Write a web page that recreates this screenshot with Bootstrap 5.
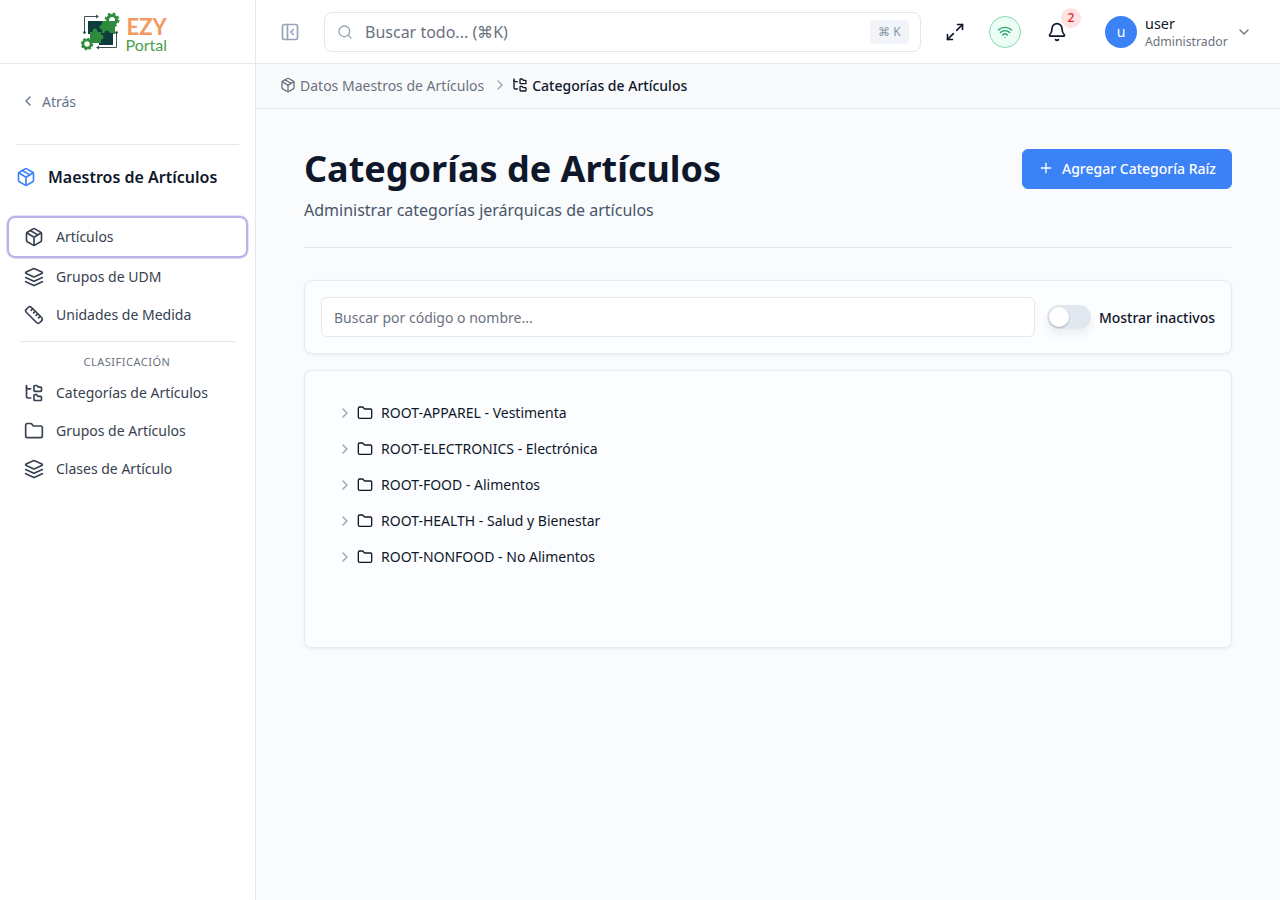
<!DOCTYPE html>
<html lang="es">
<head>
    <meta charset="UTF-8">
    <title>Categorías de Artículos</title>
    <link rel="stylesheet" href="https://cdn.jsdelivr.net/npm/bootstrap@5.3.3/dist/css/bootstrap.min.css">
    <style>
        html, body { height: 100%; }
        body { font-family: "Noto Sans", "Liberation Sans", sans-serif; font-size: 14px; color: #0f172a; background: #fafbfd; overflow: hidden; }
        .ico { width: 20px; height: 20px; fill: none; stroke: currentColor; stroke-width: 2; stroke-linecap: round; stroke-linejoin: round; flex: none; }
        .ico-16 { width: 16px; height: 16px; }
        .app-side { width: 256px; height: 900px; background: #fff; border-right: 1px solid #e5e7eb; flex: none; }
        .logo-box { height: 64px; border-bottom: 1px solid #e5e7eb; padding-right: 5px; }
        .logo-text { width: 43px; margin: 6px 0 0 5px; font-family: "Lato", sans-serif; }
        .logo-ezy { color: #f2995f; font-size: 22px; font-weight: 700; line-height: 20px; }
        .logo-portal { color: #4a9f50; font-size: 16px; line-height: 15px; margin: 0 0 0 -1px; }
        .back-link { height: 80px; padding: 0 0 6px 20px; color: #64748b; gap: 6px; text-decoration: none; }
        .side-rule { border-top: 1px solid #e5e7eb; margin: 0 16px 0 16px; height: 0; }
        .side-rule-in { border-top: 1px solid #e5e7eb; margin: 7px 20px 0 20px; height: 0; }
        .side-title { height: 71px; padding: 0 0 7px 16px; gap: 12px; font-size: 16px; font-weight: 600; color: #0f172a; }
        .side-title .ico { color: #3b82f6; }
        .side-link { height: 38px; margin: 0 7px; padding: 0 0 0 17px; gap: 12px; color: #374151; text-decoration: none; }
        .side-link span { padding-bottom: 2px; }
        .side-link-on { height: 42px; border: 2px solid #b7b3e6; border-radius: 8px; box-shadow: 0 0 0 .5px #c9c6ee, 0 1px 2px rgba(15,23,42,.05); padding-left: 15px; }
        .side-head { height: 32px; font-size: 11px; letter-spacing: .5px; color: #6b7280; padding-top: 12px; padding-right: 1px; }
        .top-bar { height: 64px; background: #fff; border-bottom: 1px solid #e5e7eb; padding: 0 0 0 24px; }
        .toggle-side { color: #94a3b8; }
        .find-box { width: 597px; height: 40px; margin-left: 24px; border: 1px solid #e5e7eb; border-radius: 8px; padding: 0 11px 0 12px; color: #94a3b8; }
        .find-text { margin-left: 12px; font-size: 16px; color: #6b7280; }
        .key-hint { width: 39px; height: 24px; background: #f1f5f9; border-radius: 4px; font-size: 12px; color: #8b95a5; }
        .expand-btn { margin-left: 24px; color: #0f172a; }
        .net-dot { width: 32px; height: 32px; margin-left: 24px; background: #ecfdf5; border: 1px solid #86d9ae; color: #22a565; }
        .bell-box { margin-left: 26px; color: #0f172a; }
        .bell-count { top: -14px; left: 14px; width: 20px; height: 20px; background: #fee2e2; color: #dc2626; font-size: 12px; font-weight: 500; }
        .user-dot { width: 32px; height: 32px; margin-left: 38px; background: #3b82f6; color: #fff; }
        .user-name { margin-left: 8px; }
        .user-role { font-size: 12.25px; color: #6b7280; line-height: 16px; }
        .user-login { line-height: 20px; font-size: 14.4px; }
        .user-caret { margin-left: 8px; color: #6b7280; }
        .crumb-bar { height: 45px; background: #f8fafc; border-bottom: 1px solid #e5e7eb; padding: 0 0 2px 24px; color: #6b7280; }
        .crumb-sep { margin: 0 4px 0 8px; color: #9ca3af; }
        .crumb-now { color: #0f172a; font-weight: 500; }
        .page-wrap { padding: 40px 48px 0 48px; }
        .page-title { font-size: 36px; font-weight: 700; line-height: 40px; color: #0f172a; margin: 0 0 0; }
        .page-sub { font-size: 16px; line-height: 24px; color: #475569; margin: 9px 0 0; }
        .add-btn { width: 210px; height: 40px; background: #3b82f6; border-color: #3b82f6; border-radius: 6px; font-size: 14px; font-weight: 500; gap: 8px; padding-top: 4px; padding-bottom: 6px; }
        .head-rule { border-top: 1px solid #e5e7eb; margin: 25px 0 32px; height: 0; }
        .soft-card { background: #fcfdfe; border: 1px solid #e9ebf0; border-radius: 8px; box-shadow: 0 1px 3px rgba(15,23,42,.07); }
        .filter-card { height: 74px; padding: 16px; margin-bottom: 16px; }
        .filter-input { height: 40px; border-color: #e5e7eb; border-radius: 6px; font-size: 14px; background: #fff; padding-left: 12px; color: #6b7280; }
        .filter-input::placeholder { color: #6b7280; }
        .switch-track { width: 44px; height: 24px; background: #e2e8f0; border-radius: 12px; margin-left: 12px; flex: none; padding: 2px; box-shadow: 0 6px 10px rgba(15,23,42,.06); }
        .switch-knob { width: 20px; height: 20px; background: #fff; border-radius: 50%; box-shadow: 0 1px 2px rgba(15,23,42,.3); }
        .switch-label { margin-left: 8px; font-weight: 500; white-space: nowrap; }
        .tree-card { height: 278px; padding: 24px 32px 0 32px; }
        .tree-row { height: 36px; color: #0f172a; }
        .tree-caret { color: #9ca3af; }
        .tree-folder { margin-left: 4px; color: #0f172a; }
        .tree-text { margin-left: 8px; padding-bottom: 2px; }
    </style>
</head>
<body>
<svg width="0" height="0" class="position-absolute">
    <symbol id="i-package" viewBox="0 0 24 24"><path d="M11 21.73a2 2 0 0 0 2 0l7-4A2 2 0 0 0 21 16V8a2 2 0 0 0-1-1.73l-7-4a2 2 0 0 0-2 0l-7 4A2 2 0 0 0 3 8v8a2 2 0 0 0 1 1.73z"/><path d="M12 22V12"/><path d="m3.3 7 7.703 4.734a2 2 0 0 0 1.994 0L20.7 7"/><path d="m7.5 4.27 9 5.15"/></symbol>
    <symbol id="i-layers" viewBox="0 0 24 24"><path d="m12.83 2.18a2 2 0 0 0-1.66 0L2.6 6.08a1 1 0 0 0 0 1.83l8.58 3.91a2 2 0 0 0 1.66 0l8.58-3.9a1 1 0 0 0 0-1.83Z"/><path d="m22 17.65-9.17 4.16a2 2 0 0 1-1.66 0L2 17.65"/><path d="m22 12.65-9.17 4.16a2 2 0 0 1-1.66 0L2 12.65"/></symbol>
    <symbol id="i-ruler" viewBox="0 0 24 24"><path d="M21.3 15.3a2.4 2.4 0 0 1 0 3.4l-2.6 2.6a2.4 2.4 0 0 1-3.4 0L2.7 8.7a2.41 2.41 0 0 1 0-3.4l2.6-2.6a2.41 2.41 0 0 1 3.4 0Z"/><path d="m14.5 12.5 2-2"/><path d="m11.5 9.5 2-2"/><path d="m8.5 6.5 2-2"/><path d="m17.5 15.5 2-2"/></symbol>
    <symbol id="i-tree" viewBox="0 0 24 24"><path d="M20 10a1 1 0 0 0 1-1V6a1 1 0 0 0-1-1h-2.5a1 1 0 0 1-.8-.4l-.9-1.2A1 1 0 0 0 15 3h-2a1 1 0 0 0-1 1v5a1 1 0 0 0 1 1Z"/><path d="M20 21a1 1 0 0 0 1-1v-3a1 1 0 0 0-1-1h-2.9a1 1 0 0 1-.88-.55l-.42-.85a1 1 0 0 0-.92-.6H13a1 1 0 0 0-1 1v5a1 1 0 0 0 1 1Z"/><path d="M3 5a2 2 0 0 0 2 2h3"/><path d="M3 3v13a2 2 0 0 0 2 2h3"/></symbol>
    <symbol id="i-folder" viewBox="0 0 24 24"><path d="M20 20a2 2 0 0 0 2-2V8a2 2 0 0 0-2-2h-7.9a2 2 0 0 1-1.69-.9L9.6 3.9A2 2 0 0 0 7.93 3H4a2 2 0 0 0-2 2v13a2 2 0 0 0 2 2Z"/></symbol>
    <symbol id="i-left" viewBox="0 0 24 24"><path d="m15 18-6-6 6-6"/></symbol>
    <symbol id="i-right" viewBox="0 0 24 24"><path d="m9 18 6-6-6-6"/></symbol>
    <symbol id="i-down" viewBox="0 0 24 24"><path d="m6 9 6 6 6-6"/></symbol>
</svg>

<div class="d-flex">
    <aside class="app-side">
        <div class="logo-box d-flex align-items-center justify-content-center">
            <svg width="41" height="39" viewBox="0 0 41 39">
                <!-- arrows round the puzzle -->
                <g fill="none" stroke="#3b5257" stroke-width="1">
                    <path d="M3.5 20V4.5H16"/><path d="M35.5 20V35.500H17"/>
                </g>
                <path d="M15 2.500l3 2-3 2z M18 33.500l-3 2 3 2z" fill="#3b5257"/>
                <circle cx="3.500" cy="20.500" r="1.300" fill="#1c3b40"/><circle cx="35.500" cy="20.500" r="1.300" fill="#1c3b40"/>
                <!-- gears -->
                <circle cx="31" cy="8" r="4.500" fill="#fff" stroke="#2e8b3d" stroke-width="3"/>
                <circle cx="31" cy="8" r="6.500" fill="none" stroke="#2e8b3d" stroke-width="2" stroke-dasharray="2.700 2.400"/>
                <!-- puzzle -->
                <rect x="7" y="9" width="14" height="13" fill="#0f3d3e"/>
                <rect x="21" y="9" width="13" height="13" fill="#2e8b3d"/>
                <circle cx="21" cy="15" r="2.500" fill="#2e8b3d"/>
                <rect x="18" y="21" width="14" height="12" fill="#0f3d3e"/>
                <circle cx="26" cy="21" r="2.500" fill="#0f3d3e"/>
                <rect x="9" y="20" width="11" height="11" fill="#2e8b3d"/>
                <circle cx="14" cy="19" r="2.500" fill="#2e8b3d"/>
                <circle cx="20" cy="25" r="2.500" fill="#2e8b3d"/>
                <circle cx="6" cy="32" r="4" fill="#fff" stroke="#2e8b3d" stroke-width="2.600"/>
                <circle cx="6" cy="32" r="5.400" fill="none" stroke="#2e8b3d" stroke-width="1.600" stroke-dasharray="2.200 2"/>
            </svg>
            <div class="logo-text">
                <div class="logo-ezy">EZY</div>
                <div class="logo-portal">Portal</div>
            </div>
        </div>
        <a href="#" class="back-link d-flex align-items-center"><svg class="ico ico-16"><use href="#i-left"/></svg>Atrás</a>
        <div class="side-rule"></div>
        <div class="side-title d-flex align-items-center"><svg class="ico"><use href="#i-package"/></svg>Maestros de Artículos</div>
        <nav class="d-flex flex-column">
            <a href="#" class="side-link side-link-on d-flex align-items-center"><svg class="ico"><use href="#i-package"/></svg><span>Artículos</span></a>
            <a href="#" class="side-link d-flex align-items-center"><svg class="ico"><use href="#i-layers"/></svg><span>Grupos de UDM</span></a>
            <a href="#" class="side-link d-flex align-items-center"><svg class="ico"><use href="#i-ruler"/></svg><span>Unidades de Medida</span></a>
            <div class="side-rule-in"></div>
            <div class="side-head text-center text-uppercase">Clasificación</div>
            <a href="#" class="side-link d-flex align-items-center"><svg class="ico"><use href="#i-tree"/></svg><span>Categorías de Artículos</span></a>
            <a href="#" class="side-link d-flex align-items-center"><svg class="ico"><use href="#i-folder"/></svg><span>Grupos de Artículos</span></a>
            <a href="#" class="side-link d-flex align-items-center"><svg class="ico"><use href="#i-layers"/></svg><span>Clases de Artículo</span></a>
        </nav>
    </aside>

    <div class="flex-grow-1">
        <header class="top-bar d-flex align-items-center">
            <svg class="ico toggle-side" viewBox="0 0 24 24" stroke-width="1.6"><rect width="18" height="18" x="3" y="3" rx="2"/><path d="M9 3v18"/><path d="m16 15-3-3 3-3"/></svg>
            <div class="find-box d-flex align-items-center">
                <svg class="ico ico-16" viewBox="0 0 24 24"><circle cx="11" cy="11" r="8"/><path d="m21 21-4.3-4.3"/></svg>
                <span class="find-text flex-grow-1">Buscar todo... (⌘K)</span>
                <span class="key-hint d-flex align-items-center justify-content-center">⌘ K</span>
            </div>
            <svg class="ico expand-btn" viewBox="0 0 24 24"><path d="M15 3h6v6"/><path d="m21 3-7 7"/><path d="m3 21 7-7"/><path d="M3 15v6h6"/></svg>
            <div class="net-dot rounded-circle d-flex align-items-center justify-content-center">
                <svg class="ico ico-16" viewBox="0 0 24 24"><path d="M12 20h.01"/><path d="M2 8.82a15 15 0 0 1 20 0"/><path d="M5 12.859a10 10 0 0 1 14 0"/><path d="M8.5 16.429a5 5 0 0 1 7 0"/></svg>
            </div>
            <div class="bell-box position-relative d-flex">
                <svg class="ico" viewBox="0 0 24 24"><path d="M10.268 21a2 2 0 0 0 3.464 0"/><path d="M3.262 15.326A1 1 0 0 0 4 17h16a1 1 0 0 0 .74-1.673C19.41 13.956 18 12.499 18 8A6 6 0 0 0 6 8c0 4.499-1.411 5.956-2.738 7.326"/></svg>
                <span class="bell-count position-absolute rounded-circle d-flex align-items-center justify-content-center">2</span>
            </div>
            <div class="user-dot rounded-circle d-flex align-items-center justify-content-center">u</div>
            <div class="user-name">
                <div class="user-login">user</div>
                <div class="user-role">Administrador</div>
            </div>
            <svg class="ico ico-16 user-caret"><use href="#i-down"/></svg>
        </header>

        <div class="crumb-bar d-flex align-items-center">
            <svg class="ico ico-16 me-1"><use href="#i-package"/></svg>
            <span>Datos Maestros de Artículos</span>
            <svg class="ico ico-16 crumb-sep"><use href="#i-right"/></svg>
            <svg class="ico ico-16 me-1 crumb-now"><use href="#i-tree"/></svg>
            <span class="crumb-now">Categorías de Artículos</span>
        </div>

        <main class="page-wrap">
            <div class="d-flex justify-content-between align-items-start">
                <div>
                    <h1 class="page-title">Categorías de Artículos</h1>
                    <p class="page-sub">Administrar categorías jerárquicas de artículos</p>
                </div>
                <button type="button" class="btn btn-primary add-btn d-flex align-items-center justify-content-center">
                    <svg class="ico ico-16" viewBox="0 0 24 24"><path d="M5 12h14"/><path d="M12 5v14"/></svg>
                    Agregar Categoría Raíz
                </button>
            </div>
            <div class="head-rule"></div>

            <div class="soft-card filter-card d-flex align-items-center">
                <input type="text" class="form-control filter-input" placeholder="Buscar por código o nombre...">
                <div class="switch-track"><div class="switch-knob"></div></div>
                <span class="switch-label">Mostrar inactivos</span>
            </div>

            <div class="soft-card tree-card">
                <div class="tree-row d-flex align-items-center"><svg class="ico ico-16 tree-caret"><use href="#i-right"/></svg><svg class="ico ico-16 tree-folder"><use href="#i-folder"/></svg><span class="tree-text">ROOT-APPAREL - Vestimenta</span></div>
                <div class="tree-row d-flex align-items-center"><svg class="ico ico-16 tree-caret"><use href="#i-right"/></svg><svg class="ico ico-16 tree-folder"><use href="#i-folder"/></svg><span class="tree-text">ROOT-ELECTRONICS - Electrónica</span></div>
                <div class="tree-row d-flex align-items-center"><svg class="ico ico-16 tree-caret"><use href="#i-right"/></svg><svg class="ico ico-16 tree-folder"><use href="#i-folder"/></svg><span class="tree-text">ROOT-FOOD - Alimentos</span></div>
                <div class="tree-row d-flex align-items-center"><svg class="ico ico-16 tree-caret"><use href="#i-right"/></svg><svg class="ico ico-16 tree-folder"><use href="#i-folder"/></svg><span class="tree-text">ROOT-HEALTH - Salud y Bienestar</span></div>
                <div class="tree-row d-flex align-items-center"><svg class="ico ico-16 tree-caret"><use href="#i-right"/></svg><svg class="ico ico-16 tree-folder"><use href="#i-folder"/></svg><span class="tree-text">ROOT-NONFOOD - No Alimentos</span></div>
            </div>
        </main>
    </div>
</div>
<script src="https://cdn.jsdelivr.net/npm/bootstrap@5.3.3/dist/js/bootstrap.bundle.min.js"></script>
</body>
</html>
